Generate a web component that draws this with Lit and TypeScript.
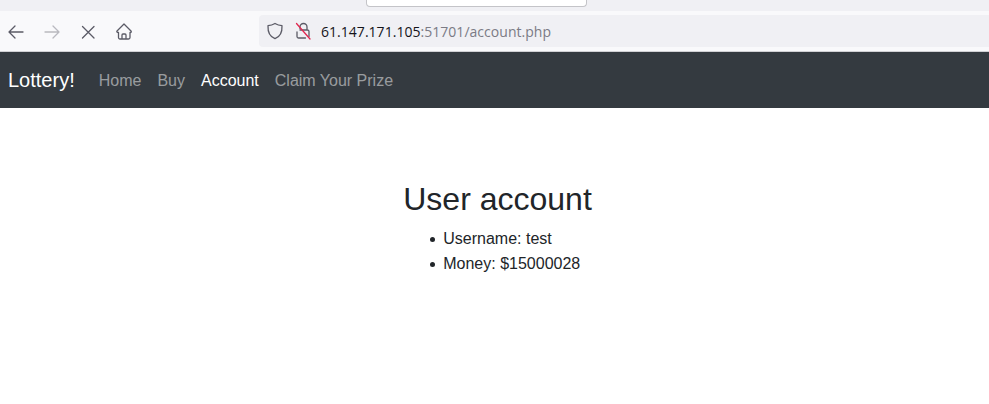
import { LitElement, html, css } from "lit";
import { customElement } from "lit/decorators.js";

@customElement("app-root")
export class AppRoot extends LitElement {
  static styles = css`
    :host {
      display: block;
      height: 404px;
      overflow: hidden;
      background: #fff;
      font-family: "Liberation Sans", Arial, sans-serif;
      color: #212529;
    }
    .tabstrip {
      height: 11px;
      background: #f0f0f4;
      display: flex;
      padding-left: 366px;
    }
    .popup {
      width: 221px;
      height: 7px;
      background: #fff;
      border: 1px solid #c4c4c8;
      border-top: none;
      border-radius: 0 0 4px 4px;
      box-sizing: border-box;
    }
    .toolbar {
      height: 40px;
      background: #f9f9fb;
      border-bottom: 1px solid #d0d0d4;
      display: flex;
      align-items: center;
      padding-left: 6px;
    }
    .btn {
      width: 20px;
      height: 20px;
      margin: 1px 16px 0 0;
      flex: none;
    }
    .btn svg,
    .urlbar svg {
      display: block;
      fill: none;
      stroke: #5b5b66;
      stroke-width: 1.3;
      stroke-linecap: round;
      stroke-linejoin: round;
    }
    .btn.off svg {
      stroke: #b9b9bf;
    }
    .urlbar {
      margin-left: 109px;
      flex: 1;
      height: 32px;
      background: #f0f0f4;
      border-radius: 4px 0 0 4px;
      display: flex;
      align-items: center;
      padding-left: 7px;
      font-family: "Open Sans", "Noto Sans", sans-serif;
      font-size: 14px;
      letter-spacing: 0.03px;
      color: #7b7b85;
    }
    .urlbar svg {
      flex: none;
    }
    .lock {
      margin-left: 10px;
      margin-right: 9px;
    }
    .strike {
      stroke: #e22850;
    }
    .host {
      color: #15141a;
    }
    nav {
      height: 56px;
      box-sizing: border-box;
      background: #343a40;
      display: flex;
      align-items: center;
      padding: 1px 8px 0;
    }
    .brand {
      font-size: 20px;
      color: #fff;
      margin-right: 16px;
    }
    nav a {
      font-size: 16px;
      padding: 0 8px;
      color: rgba(255, 255, 255, 0.5);
    }
    nav a.active {
      color: #fff;
    }
    main {
      display: flex;
      justify-content: center;
      padding: 72px 0 0 6px;
    }
    h1 {
      margin: 0 0 9px;
      font-size: 32px;
      font-weight: 400;
      line-height: 1.2;
    }
    ul {
      margin: 0;
      padding-left: 40px;
      font-size: 16px;
      line-height: 24.5px;
      list-style: none;
    }
    li {
      position: relative;
    }
    li::before {
      content: "";
      position: absolute;
      left: -13.500px;
      top: 10px;
      width: 5px;
      height: 5px;
      border-radius: 50%;
      background: #212529;
    }
  `;

  render() {
    return html`
      <div class="tabstrip"><div class="popup"></div></div>
      <div class="toolbar">
        <div class="btn">
          <svg width="20" height="20" viewBox="0 0 20 20">
            <path d="M17 10H3.5M9 4 3 10l6 6" />
          </svg>
        </div>
        <div class="btn off">
          <svg width="20" height="20" viewBox="0 0 20 20">
            <path d="M3 10h13.5M11 4l6 6-6 6" />
          </svg>
        </div>
        <div class="btn">
          <svg width="20" height="20" viewBox="0 0 20 20">
            <path d="M4.500 4.500l11.500 11.500M16 4.500 4.500 16" />
          </svg>
        </div>
        <div class="btn">
          <svg width="20" height="20" viewBox="0 0 20 20">
            <path
              d="M3 9 10 2l7 7c.6.700.2 1.500-.6 1.500h-.4v5a1.500 1.500 0 0 1-1.500 1.500h-8.500A1.500 1.500 0 0 1 4.500 15.500v-5h-.4c-.8 0-1.700-.8-1.100-1.500zM8 17v-4a1 1 0 0 1 1-1h2a1 1 0 0 1 1 1v4"
            />
          </svg>
        </div>
        <div class="urlbar">
          <svg width="18" height="18" viewBox="0 0 18 18">
            <path
              d="M9 1.500c2.200 1.300 4.500 2 7 2.200.3 6-1.500 10.800-7 13C3.500 14.500 1.700 9.700 2 3.700 4.500 3.500 6.800 2.800 9 1.500z"
            />
          </svg>
          <svg class="lock" width="18" height="18" viewBox="0 0 18 18">
            <path
              d="M6 6.500V5a3.500 3.500 0 0 1 7 0v3M3 10v4.500A1.500 1.500 0 0 0 4.500 16h7M15 14.500v-5A1.500 1.500 0 0 0 13.500 8H6"
            />
            <path class="strike" d="M2.500 1.500 16 17" />
          </svg>
          <span><span class="host">61.147.171.105</span>:51701/account.php</span>
        </div>
      </div>
      <nav>
        <span class="brand">Lottery!</span>
        <a>Home</a>
        <a>Buy</a>
        <a class="active">Account</a>
        <a>Claim Your Prize</a>
      </nav>
      <main>
        <div>
          <h1>User account</h1>
          <ul>
            <li>Username: test</li>
            <li>Money: $15000028</li>
          </ul>
        </div>
      </main>
    `;
  }
}
